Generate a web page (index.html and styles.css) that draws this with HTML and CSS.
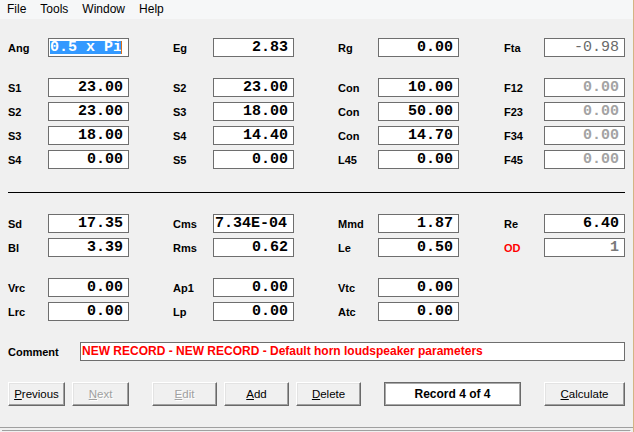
FILE: index.html
```html
<!DOCTYPE html>
<html>
<head>
<meta charset="utf-8">
<title>Horn Loudspeaker Parameters</title>
<link rel="stylesheet" href="styles.css">
</head>
<body>
<div class="window">
  <nav class="menubar">
    <span class="menu">File</span>
    <span class="menu">Tools</span>
    <span class="menu">Window</span>
    <span class="menu">Help</span>
  </nav>
  <main class="form">
    <div class="grid">
      <div class="cell"><span class="lbl">Ang</span><span class="box left"><span class="sel">0.5 x Pi</span><span class="caret"></span></span></div>
      <div class="cell"><span class="lbl">Eg</span><span class="box">2.83</span></div>
      <div class="cell"><span class="lbl">Rg</span><span class="box">0.00</span></div>
      <div class="cell"><span class="lbl">Fta</span><span class="box ro thin">-0.98</span></div>
    </div>
    <div class="grid group">
      <div class="cell"><span class="lbl">S1</span><span class="box">23.00</span></div>
      <div class="cell"><span class="lbl">S2</span><span class="box">23.00</span></div>
      <div class="cell"><span class="lbl">Con</span><span class="box">10.00</span></div>
      <div class="cell"><span class="lbl">F12</span><span class="box ro">0.00</span></div>

      <div class="cell"><span class="lbl">S2</span><span class="box">23.00</span></div>
      <div class="cell"><span class="lbl">S3</span><span class="box">18.00</span></div>
      <div class="cell"><span class="lbl">Con</span><span class="box">50.00</span></div>
      <div class="cell"><span class="lbl">F23</span><span class="box ro">0.00</span></div>

      <div class="cell"><span class="lbl">S3</span><span class="box">18.00</span></div>
      <div class="cell"><span class="lbl">S4</span><span class="box">14.40</span></div>
      <div class="cell"><span class="lbl">Con</span><span class="box">14.70</span></div>
      <div class="cell"><span class="lbl">F34</span><span class="box ro">0.00</span></div>

      <div class="cell"><span class="lbl">S4</span><span class="box">0.00</span></div>
      <div class="cell"><span class="lbl">S5</span><span class="box">0.00</span></div>
      <div class="cell"><span class="lbl">L45</span><span class="box">0.00</span></div>
      <div class="cell"><span class="lbl">F45</span><span class="box ro">0.00</span></div>
    </div>
    <div class="sep"></div>
    <div class="grid after-sep">
      <div class="cell"><span class="lbl">Sd</span><span class="box">17.35</span></div>
      <div class="cell"><span class="lbl">Cms</span><span class="box left">7.34E-04</span></div>
      <div class="cell"><span class="lbl">Mmd</span><span class="box">1.87</span></div>
      <div class="cell"><span class="lbl">Re</span><span class="box">6.40</span></div>

      <div class="cell"><span class="lbl">Bl</span><span class="box">3.39</span></div>
      <div class="cell"><span class="lbl">Rms</span><span class="box">0.62</span></div>
      <div class="cell"><span class="lbl">Le</span><span class="box">0.50</span></div>
      <div class="cell"><span class="lbl red">OD</span><span class="box ro dark">1</span></div>
    </div>
    <div class="grid group">
      <div class="cell"><span class="lbl">Vrc</span><span class="box">0.00</span></div>
      <div class="cell"><span class="lbl">Ap1</span><span class="box">0.00</span></div>
      <div class="cell"><span class="lbl">Vtc</span><span class="box">0.00</span></div>
      <div class="cell"></div>

      <div class="cell"><span class="lbl">Lrc</span><span class="box">0.00</span></div>
      <div class="cell"><span class="lbl">Lp</span><span class="box">0.00</span></div>
      <div class="cell"><span class="lbl">Atc</span><span class="box">0.00</span></div>
      <div class="cell"></div>
    </div>
    <div class="comment-row">
      <span class="lbl comment-lbl">Comment</span>
      <span class="comment-box">NEW RECORD - NEW RECORD - Default horn loudspeaker parameters</span>
    </div>
    <div class="buttons">
      <button class="btn small"><u>P</u>revious</button>
      <button class="btn small" disabled><u>N</u>ext</button>
      <button class="btn mid spaced" disabled><u>E</u>dit</button>
      <button class="btn mid"><u>A</u>dd</button>
      <button class="btn mid"><u>D</u>elete</button>
      <div class="record spaced">Record 4 of 4</div>
      <button class="btn wide spaced"><u>C</u>alculate</button>
    </div>
  </main>
  <footer class="status"><div class="status-inner"></div></footer>
</div>
</body>
</html>
```

FILE: styles.css
```css
html, body {
  margin: 0;
  padding: 0;
  background: #f0f0f0;
}
body {
  width: 634px;
  height: 432px;
  overflow: hidden;
}
.window {
  width: 633px;
  height: 432px;
  border-right: 1px solid #d4b484;
  background: #f0f0f0;
  display: flex;
  flex-direction: column;
}
.menubar {
  height: 20px;
  background: #f6f7f8;
  display: flex;
  align-items: center;
  font-family: "Liberation Sans", Arial, sans-serif;
  font-size: 12px;
  line-height: 19px;
  color: #000;
}
.menu {
  padding: 0 7px;
}
.form {
  padding: 19px 8px 0;
  display: flex;
  flex-direction: column;
}
.grid {
  display: grid;
  grid-template-columns: 165px 165px 166px 121px;
  row-gap: 5px;
}
.group {
  margin-top: 21px;
}
.after-sep {
  margin-top: 21px;
}
.cell {
  display: flex;
  align-items: center;
  height: 19px;
}
.lbl {
  width: 40px;
  font-family: "Liberation Sans", Arial, sans-serif;
  font-weight: bold;
  font-size: 11px;
  color: #000;
}
.lbl.red {
  color: #ff0000;
}
.box {
  box-sizing: border-box;
  width: 81px;
  height: 19px;
  border: 1px solid #6e6e6e;
  background: #fff;
  display: flex;
  align-items: center;
  justify-content: flex-end;
  padding-right: 5px;
  font-family: "Liberation Mono", "Courier New", monospace;
  font-weight: bold;
  font-size: 15px;
  line-height: 17px;
  color: #000;
  white-space: pre;
}
.box.left {
  justify-content: flex-start;
  padding: 0 0 0 1px;
}
.box.ro {
  color: #a3a3a3;
}
.box.ro.thin {
  font-weight: normal;
  color: #6a6a6a;
}
.box.ro.dark {
  color: #7a7a7a;
}
.sel {
  display: inline-block;
  background: #3399ff;
  color: #fff;
  line-height: 13px;
  height: 13px;
  padding-right: 0;
  width: 71px;
}
.caret {
  display: inline-block;
  width: 1px;
  height: 13px;
  background: #d8701c;
}
.sep {
  margin-top: 23px;
  height: 1px;
  background: #000;
}
.comment-row {
  margin-top: 21px;
  display: flex;
  align-items: center;
  height: 19px;
}
.comment-lbl {
  width: 72px;
}
.comment-box {
  box-sizing: border-box;
  width: 545px;
  height: 19px;
  border: 1px solid #6e6e6e;
  background: #fff;
  padding-left: 1px;
  font-family: "Liberation Sans", Arial, sans-serif;
  font-weight: bold;
  font-size: 12px;
  line-height: 17px;
  color: #ff0000;
  white-space: nowrap;
}
.buttons {
  margin-top: 21px;
  display: flex;
  gap: 7px;
  height: 24px;
}
.spaced {
  margin-left: 16px;
}
.btn {
  box-sizing: border-box;
  height: 24px;
  padding: 0;
  margin-top: 0;
  margin-bottom: 0;
  background: #f0f0f0;
  border: 1px solid;
  border-color: #ffffff #696969 #696969 #ffffff;
  box-shadow: inset -1px -1px 0 #a0a0a0, inset 1px 1px 0 #e3e3e3;
  font-family: "Liberation Sans", Arial, sans-serif;
  font-size: 11.5px;
  color: #000;
  line-height: 20px;
  text-align: center;
}
.btn:disabled {
  color: #a0a0a0;
  text-shadow: 1px 1px 0 #ffffff;
}
.btn.small { width: 57px; }
.btn.mid { width: 65px; }
.btn.wide { width: 81px; }
.record {
  box-sizing: border-box;
  width: 137px;
  height: 24px;
  background: #fff;
  border: 1px solid #6a6a6a;
  box-shadow: inset 0 0 0 1px #a8a8a8;
  display: flex;
  align-items: center;
  justify-content: center;
  font-family: "Liberation Sans", Arial, sans-serif;
  font-weight: bold;
  font-size: 12px;
  color: #000;
}
.status {
  margin-top: 21px;
  border-top: 1px solid #a0a0a0;
  padding: 2px 0 0 2px;
  flex: 1;
}
.status-inner {
  box-sizing: border-box;
  width: 629px;
  height: 10px;
  border-top: 1px solid #a0a0a0;
  border-right: 1px solid #ffffff;
}
```
